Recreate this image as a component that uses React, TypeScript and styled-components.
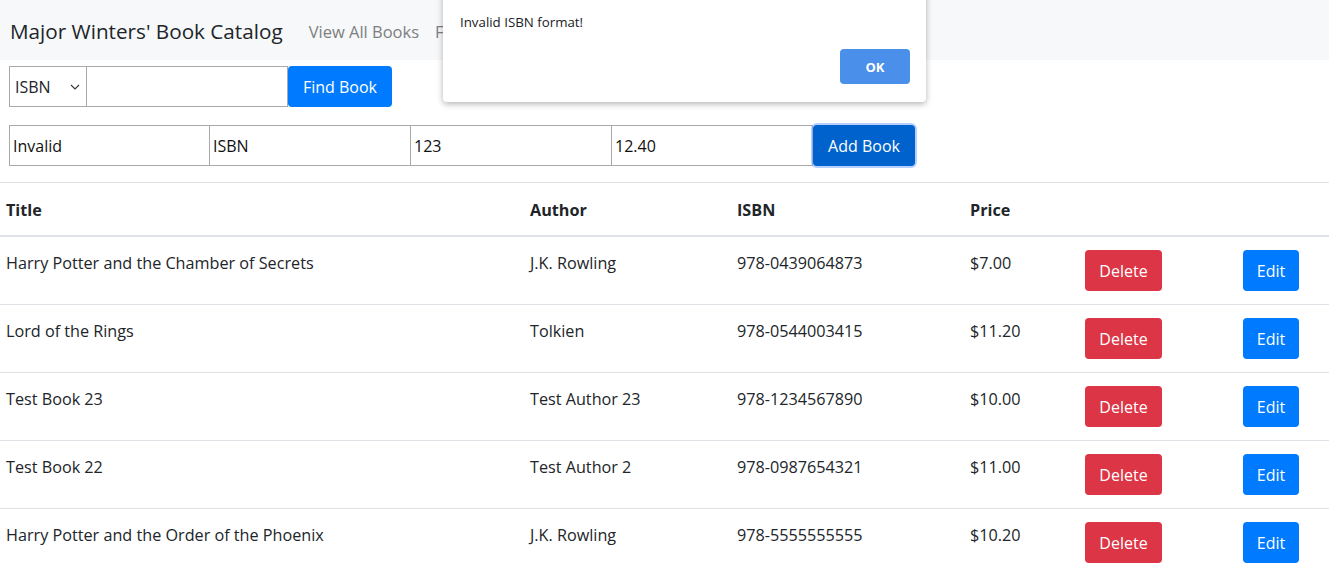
import React from 'react'
import styled, { createGlobalStyle } from 'styled-components'

const GlobalStyle = createGlobalStyle`
  html, body {
    margin: 0;
    padding: 0;
    background: #fff;
    font-family: "Open Sans", "Noto Sans", sans-serif;
    color: #212529;
  }
  * { box-sizing: border-box; }
`

const font = `"Open Sans", "Noto Sans", sans-serif`

const Page = styled.div`
  position: relative;
  width: 1329px;
  height: 580px;
  overflow: hidden;
`

const NavBar = styled.nav`
  height: 60px;
  background: #f6f8fa;
  display: flex;
  align-items: center;
  padding: 2px 10px 0;
`

const Brand = styled.span`
  font-size: 20.7px;
  color: #212529;
  margin-right: 26px;
`

const NavLink = styled.span`
  font-size: 16.5px;
  color: #7d7f81;
  margin-right: 16px;
`

const FormRow = styled.div<{ top: number }>`
  display: flex;
  margin-top: ${({ top }) => top}px;
  padding-left: ${({ top }) => (top === 6 ? 9 : 10)}px;
`

const Select = styled.div`
  width: 78px;
  height: 41px;
  border: 1px solid #a9a9a9;
  display: flex;
  align-items: center;
  justify-content: space-between;
  padding: 0 6px 0 5px;
  font-size: 16px;
`

const Input = styled.div<{ w: number }>`
  width: ${({ w }) => w}px;
  height: 41px;
  border: 1px solid #a9a9a9;
  margin-left: -1px;
  display: flex;
  align-items: center;
  padding: 0 3px;
  font-size: 16px;
  color: #111;
  background: #fff;
`

const Button = styled.button<{ variant: 'primary' | 'active' | 'danger'; w: number }>`
  width: ${({ w }) => w}px;
  height: 41px;
  border: none;
  border-radius: 4px;
  color: #fff;
  font-family: ${font};
  font-size: 16px;
  padding: 0;
  background: ${({ variant }) =>
    variant === 'danger' ? '#dc3545' : variant === 'active' ? '#0062cc' : '#007bff'};
  box-shadow: ${({ variant }) =>
    variant === 'active' ? '0 0 0 2px rgba(120, 170, 255, 0.55)' : 'none'};
`

const Table = styled.table`
  width: 1329px;
  border-collapse: collapse;
  margin-top: 16px;
  table-layout: fixed;
  font-size: 16.2px;
`

const Th = styled.th<{ w: number }>`
  width: ${({ w }) => w}px;
  text-align: left;
  font-weight: 700;
  padding: 14px 6px 12px;
  line-height: 26px;
  border-top: 1px solid #dee2e6;
  border-bottom: 2px solid #dee2e6;
  vertical-align: top;
`

const Td = styled.td`
  padding: 13px 6px;
  line-height: 26px;
  border-top: 1px solid #dee2e6;
  vertical-align: top;
  white-space: nowrap;
`

const Dialog = styled.div`
  position: absolute;
  left: 443px;
  top: -20px;
  width: 483px;
  height: 122px;
  background: #fff;
  border-radius: 0 0 4px 4px;
  box-shadow: 0 2px 6px rgba(0, 0, 0, 0.3);
  padding: 33px 16px 0 17px;
  display: flex;
  flex-direction: column;
`

const DialogText = styled.div`
  font-size: 13.3px;
  color: #202124;
`

const DialogActions = styled.div`
  display: flex;
  justify-content: flex-end;
  margin-top: 18px;
`

const OkButton = styled.button`
  width: 70px;
  height: 35px;
  border: none;
  border-radius: 4px;
  background: #4a8fe9;
  color: #fff;
  font-family: ${font};
  font-weight: 700;
  font-size: 13px;
  padding: 0;
`

const Chevron = () => (
  <svg width="10" height="6" viewBox="0 0 10 6">
    <path d="M1 1l4 4 4-4" fill="none" stroke="#333" strokeWidth="1.1" />
  </svg>
)

const books = [
  { title: 'Harry Potter and the Chamber of Secrets', author: 'J.K. Rowling', isbn: '978-0439064873', price: '$7.00' },
  { title: 'Lord of the Rings', author: 'Tolkien', isbn: '978-0544003415', price: '$11.20' },
  { title: 'Test Book 23', author: 'Test Author 23', isbn: '978-1234567890', price: '$10.00' },
  { title: 'Test Book 22', author: 'Test Author 2', isbn: '978-0987654321', price: '$11.00' },
  { title: 'Harry Potter and the Order of the Phoenix', author: 'J.K. Rowling', isbn: '978-5555555555', price: '$10.20' },
]

export default function App() {
  return (
    <Page>
      <GlobalStyle />
      <NavBar>
        <Brand>Major Winters' Book Catalog</Brand>
        <NavLink>View All Books</NavLink>
        <NavLink>Find Book</NavLink>
      </NavBar>

      <FormRow top={6}>
        <Select>
          ISBN <Chevron />
        </Select>
        <Input w={202} />
        <Button variant="primary" w={104}>Find Book</Button>
      </FormRow>

      <FormRow top={18}>
        <Input w={201}>Invalid</Input>
        <Input w={202}>ISBN</Input>
        <Input w={202}>123</Input>
        <Input w={202}>12.40</Input>
        <Button variant="active" w={102}>Add Book</Button>
      </FormRow>

      <Table>
        <thead>
          <tr>
            <Th w={524}>Title</Th>
            <Th w={207}>Author</Th>
            <Th w={233}>ISBN</Th>
            <Th w={115}>Price</Th>
            <Th w={158}></Th>
            <Th w={92}></Th>
          </tr>
        </thead>
        <tbody>
          {books.map((b) => (
            <tr key={b.isbn}>
              <Td>{b.title}</Td>
              <Td>{b.author}</Td>
              <Td>{b.isbn}</Td>
              <Td>{b.price}</Td>
              <Td><Button variant="danger" w={77}>Delete</Button></Td>
              <Td><Button variant="primary" w={56}>Edit</Button></Td>
            </tr>
          ))}
        </tbody>
      </Table>

      <Dialog>
        <DialogText>Invalid ISBN format!</DialogText>
        <DialogActions>
          <OkButton>OK</OkButton>
        </DialogActions>
      </Dialog>
    </Page>
  )
}
